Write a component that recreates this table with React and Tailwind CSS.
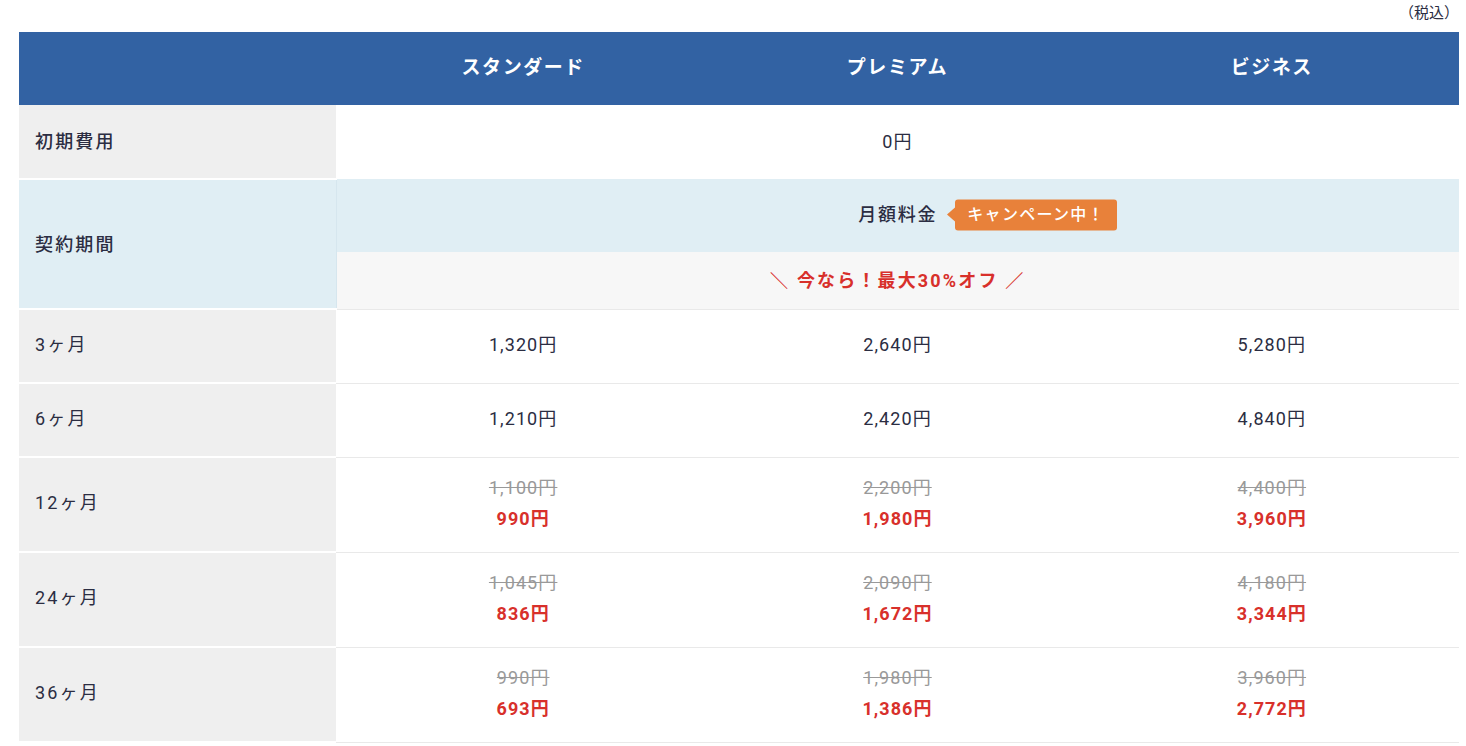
import React from 'react';

const plans = ['スタンダード', 'プレミアム', 'ビジネス'];

const plainRows = [
  { label: '3ヶ月', prices: ['1,320円', '2,640円', '5,280円'] },
  { label: '6ヶ月', prices: ['1,210円', '2,420円', '4,840円'] },
];

const saleRows = [
  { label: '12ヶ月', prices: [['1,100円', '990円'], ['2,200円', '1,980円'], ['4,400円', '3,960円']] },
  { label: '24ヶ月', prices: [['1,045円', '836円'], ['2,090円', '1,672円'], ['4,180円', '3,344円']] },
  { label: '36ヶ月', prices: [['990円', '693円'], ['1,980円', '1,386円'], ['3,960円', '2,772円']] },
];

const font = { fontFamily: 'Roboto, "Noto Sans CJK JP", sans-serif' };

const labelCell = 'bg-[#efefef] border-b-2 border-white pl-[16px] text-left tracking-[0.12em]';
const valueCell = 'border-b border-[#e9e9e9] text-center pb-[4px] tracking-[0.06em]';

export default function App() {
  return (
    <div className="bg-white min-h-[746px] text-[#2b2d42] text-[18px]" style={font}>
      <div className="h-[32px] w-[1440px] ml-[19px] text-right pt-[2px] text-[15px]">（税込）</div>
      <table className="ml-[19px] w-[1440px] border-collapse table-fixed">
        <colgroup>
          <col className="w-[317px]" />
          <col />
          <col />
          <col />
        </colgroup>
        <thead>
          <tr className="h-[73px] bg-[#3262a3] text-white">
            <th></th>
            {plans.map((p) => (
              <th key={p} className="font-bold text-[19px] tracking-[0.08em]">{p}</th>
            ))}
          </tr>
        </thead>
        <tbody>
          {/* initial fee */}
          <tr className="h-[74px]">
            <th className={labelCell + ' font-medium'}>初期費用</th>
            <td colSpan={3} className="text-center pb-[2px] tracking-[0.06em]">0円</td>
          </tr>

          {/* monthly fee header with campaign */}
          <tr className="h-[73px]">
            <th rowSpan={2} className="bg-[#e0eef4] border-b-2 border-white border-r border-r-[#d6e6ee] pl-[16px] text-left font-medium tracking-[0.12em]">契約期間</th>
            <td colSpan={3} className="bg-[#e0eef4] text-center pb-[2px]">
              <span className="relative inline-block font-medium tracking-[0.1em]">
                月額料金
                <span className="absolute left-[calc(100%+18px)] top-1/2 -translate-y-1/2 bg-[#e8813a] text-white text-[16px] font-medium rounded-[3px] h-[31px] px-[12px] flex items-center whitespace-nowrap tracking-[0.08em]">
                  <span className="absolute left-[-8px] top-1/2 -translate-y-1/2 w-0 h-0 border-y-[7px] border-y-transparent border-r-[8px] border-r-[#e8813a]"></span>
                  キャンペーン中！
                </span>
              </span>
            </td>
          </tr>
          <tr className="h-[57px]">
            <td colSpan={3} className="bg-[#f7f7f7] border-b border-[#e9e9e9] text-center text-[#d8302b] font-bold tracking-[0.12em]">
              ＼ 今なら！最大30%オフ ／
            </td>
          </tr>

          {plainRows.map((r) => (
            <tr key={r.label} className="h-[74px]">
              <th className={labelCell + ' pb-[4px] font-normal'}>{r.label}</th>
              {r.prices.map((p, i) => (
                <td key={i} className={valueCell}>{p}</td>
              ))}
            </tr>
          ))}

          {saleRows.map((r) => (
            <tr key={r.label} className="h-[95px]">
              <th className={labelCell + ' pb-[4px] font-normal'}>{r.label}</th>
              {r.prices.map(([old, now], i) => (
                <td key={i} className={valueCell}>
                  <div className="flex flex-col items-center leading-[31px]">
                    <span className="line-through text-[#999999]">{old}</span>
                    <span className="text-[#d8302b] font-bold">{now}</span>
                  </div>
                </td>
              ))}
            </tr>
          ))}
        </tbody>
      </table>
    </div>
  );
}
